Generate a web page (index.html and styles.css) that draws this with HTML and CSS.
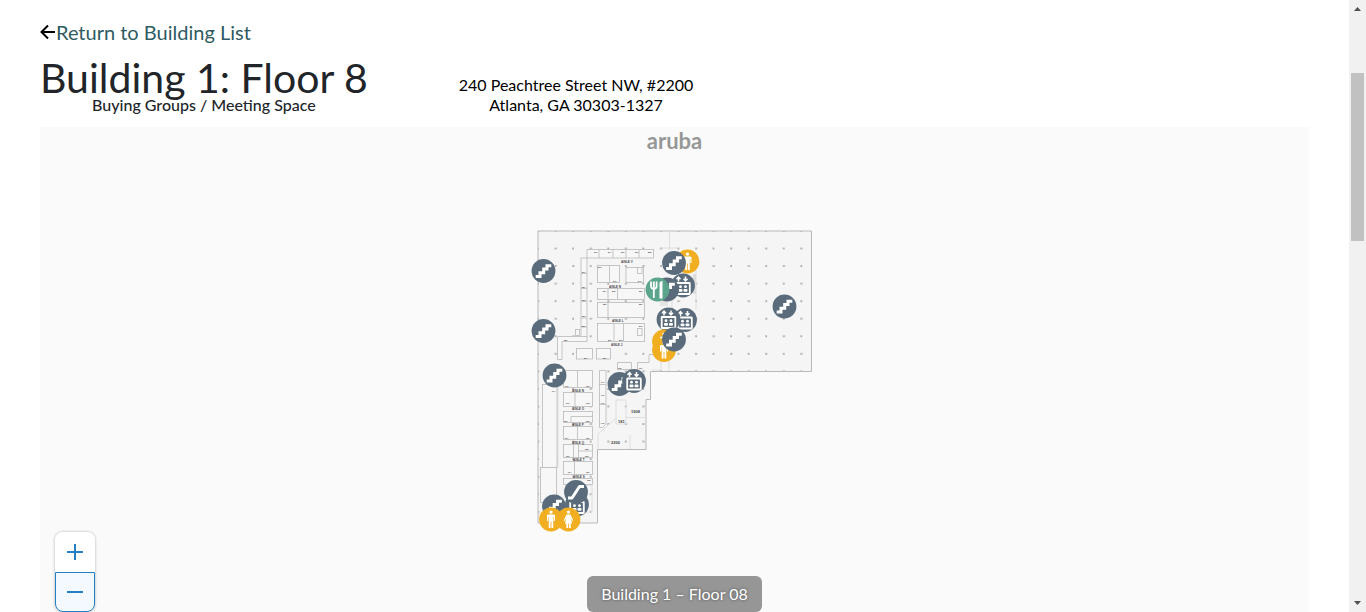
FILE: index.html
```html
<!DOCTYPE html>
<html lang="en">
<head>
<meta charset="utf-8">
<title>Building 1: Floor 8</title>
<link rel="stylesheet" href="styles.css">
</head>
<body>
<main class="page">
  <a class="back" href="#"><svg class="back-icon" viewBox="0 0 16 16" aria-hidden="true"><path d="M15 8H2M8 1.500L1.500 8L8 14.500"/></svg>Return to Building List</a>
  <header class="heading">
    <div class="heading-main">
      <h1 class="title">Building 1: Floor 8</h1>
      <p class="subtitle">Buying Groups / Meeting Space</p>
    </div>
    <address class="address">240 Peachtree Street NW, #2200<br>Atlanta, GA 30303-1327</address>
  </header>
  <section class="map" aria-label="Floor map">
    <div class="brand">aruba</div>
    <svg class="plan" viewBox="525 225 300 310" role="img" aria-label="Floor 8 plan">
      <defs>
        <pattern id="cols" x="536" y="229" width="35.100" height="35.100" patternUnits="userSpaceOnUse">
          <g fill="#c9c9c9"><rect x="1" y="1" width="2.500" height="2"/><rect x="18.500" y="18.500" width="2.500" height="2"/></g>
          <g fill="#858585"><rect x="18.900" y="1.200" width="1.500" height="1.500"/><rect x="1.300" y="18.800" width="1.500" height="1.500"/></g>
          <g fill="#a8a8a8"><rect x="1.500" y="1.300" width="1.300" height="1.300"/><rect x="19" y="19" width="1.300" height="1.300"/></g>
        </pattern>
        <g id="disc"><circle r="11.900" fill="#5a6c7b"/></g>
        <g id="stairs"><use href="#disc"/><path d="M-7.800 5.500H-3.500V1.700H.2V-2H3.500V-5.300H7.800" fill="none" stroke="#fff" stroke-width="3"/></g>
        <g id="escalator"><use href="#disc"/><path d="M-8 6H-4L3.500-5.500H8" fill="none" stroke="#fff" stroke-width="3" stroke-linejoin="round"/></g>
        <g id="lift"><use href="#disc"/>
          <path d="M-4.500-4V-8M-6.500-6.300L-4.500-8.500L-2.500-6.300M2.500-9V-5M.5-6.700L2.500-4.500L4.500-6.700" fill="none" stroke="#fff" stroke-width="1.500"/>
          <rect x="-6.800" y="-2.500" width="13.600" height="11" rx=".5" fill="#5a6c7b" stroke="#fff" stroke-width="1.800"/>
          <g fill="#fff"><circle cx="-2.500" cy="1.200" r="1.400"/><circle cx="2.500" cy="1.200" r="1.400"/><rect x="-4.500" y="3.400" width="4" height="2.800" rx="1"/><rect x=".5" y="3.400" width="4" height="2.800" rx="1"/></g></g>
        <g id="man"><circle r="11.900" fill="#f0ae20"/><g fill="#fff"><circle cy="-7.400" r="1.700"/><path d="M-2.800-5H2.800Q4-5 4-3.800V1.500H2.800V-2.500H2.300V8.500H.4V2H-.4V8.500H-2.300V-2.500H-2.800V1.500H-4V-3.800Q-4-5-2.800-5Z"/></g></g>
        <g id="woman"><circle r="11.900" fill="#f0ae20"/><g fill="#fff"><circle cy="-7.400" r="1.700"/><path d="M-2-5H2L4.800 1L3.700 1.500L2-2L3.600 4H2.200V8.500H.4V4H-.4V8.500H-2.200V4H-3.600L-2-2L-3.700 1.500L-4.800 1Z"/></g></g>
        <g id="food"><circle r="11.900" fill="#5aa58b"/><path d="M-6.500-8V-3.500Q-6.500-.5-3.700-.5T-.9-3.500V-8M-3.700-8V8.500" fill="none" stroke="#fff" stroke-width="1.800"/><path d="M2 9V-6Q2-8.500 5-8.500V9Z" fill="#fff"/></g>
      </defs>
      <path d="M538 231H811.500V371.500H650.500V399.500H646V449.500H597.500V523H538Z" fill="#f5f5f5"/>
      <path d="M538 231H811.500V371.500H650.500V399.500H646V449.500H597.500V523H538Z" fill="url(#cols)"/>
      <path d="M538 231H811.500V371.500H650.500V399.500H646V449.500H597.500V523H538Z" fill="none" stroke="#b9b9b9"/>
      <g fill="none" stroke="#dedede"><path d="M669.500 231V250M661 248H677M669 333V371M652 370H661V355M672 300V312M688 270H696V310M616 400H626V424H616ZM626 417.500H646M598 449V434L616 418M630 435V449M566 485H592V512H580M558 384V468"/></g>
      <g fill="#f7f7f7" stroke="#b9b9b9" stroke-width=".8">
        <rect x="587" y="249.500" width="66.500" height="8.500"/><rect x="581" y="258" width="6" height="79"/>
        <rect x="597.500" y="265.500" width="22" height="17"/><rect x="626" y="267.500" width="17.500" height="15"/><rect x="637.500" y="267.500" width="4.500" height="6"/>
        <rect x="597.500" y="288.500" width="47" height="11"/><rect x="597.500" y="302.500" width="47" height="15"/><rect x="597.500" y="323.500" width="47" height="18"/>
        <rect x="637.500" y="328.500" width="4.500" height="7"/><rect x="575.500" y="329.500" width="4" height="6"/>
        <path d="M557.500 336.500H587V341.500H562V359.500H557.500Z"/><rect x="576.500" y="348.500" width="16" height="10.500"/><rect x="596.500" y="348.500" width="14" height="10.500"/>
        <path d="M617.500 369.500V362.500H631.500V369.500ZM637.500 371V362.500H649V354.500H653" fill="none"/>
        <rect x="563.500" y="370.500" width="29" height="17"/><rect x="563.500" y="392.500" width="29" height="14"/><rect x="563.500" y="411.500" width="29" height="11"/>
        <rect x="563.500" y="426.500" width="29" height="13"/><rect x="563.500" y="444.500" width="29" height="13"/><rect x="563.500" y="461.500" width="29" height="13"/><rect x="563.500" y="478.500" width="29" height="6"/>
        <path d="M599.500 370.500H606V424L602.500 427.500H599.500Z"/><rect x="542.500" y="384.500" width="14.500" height="83"/><rect x="540.500" y="467.500" width="16" height="35"/>
        <path d="M599 249.500V258M613 249.500V258M626 249.500V258M639 249.500V258M581 273.500H587M581 288.500H587M581 301.500H587M581 318H587M581 327H587M609.500 265.500V282M608 288.500V299M617.500 288.500V299M608 302.500V317M614 323.500V341M623.500 323.500V341M577.500 370.500V387M575 392.500V406M571 422V416.500H592M577.500 426.500V439M573.500 444.500V457M578.500 444.500V457M578.500 451H592M574.500 461.500V474M599 384.500H606M599 404.500H606" fill="none"/>
      </g>
      <g class="aisle"><text x="621" y="263">AISLE V</text><text x="609" y="287.500">AISLE N</text><text x="612" y="322">AISLE L</text><text x="611" y="345.500">AISLE J</text><text x="572" y="391.500">AISLE N</text><text x="572" y="410">AISLE O</text><text x="572" y="426">AISLE P</text><text x="572" y="443.500">AISLE Q</text><text x="573" y="461">AISLE T</text><text x="573" y="478">AISLE S</text></g>
      <g class="unit"><text x="594" y="252.500">876</text><text x="608" y="252.500">874</text><text x="621" y="252.500">872</text><text x="635" y="252.500">870</text><text x="648" y="252.500">868</text><text x="598" y="268">836</text><text x="613" y="281.500">842</text><text x="638" y="281.500">841</text><text x="603" y="291.500">834</text><text x="612" y="291.500">832</text><text x="639" y="291.500">850</text><text x="603" y="305">822</text><text x="639" y="305">826</text><text x="608" y="340.500">810</text><text x="619" y="340.500">812</text><text x="639" y="327">816</text><text x="582" y="273">871</text><text x="582" y="288">867</text><text x="582" y="301">865</text><text x="582" y="317">863</text><text x="582" y="326.500">861</text><text x="564" y="340.500">859</text><text x="584" y="358.500">801</text><text x="603" y="358.500">803</text><text x="618" y="369">905</text><text x="639" y="369">907</text><text x="565" y="387">910</text><text x="586" y="387">912</text><text x="552" y="392">914</text><text x="566" y="404">916</text><text x="586" y="404">918</text><text x="564" y="422">920</text><text x="586" y="422">922</text><text x="565" y="439">924</text><text x="586" y="439">926</text><text x="585" y="450">928</text><text x="566" y="457">930</text><text x="585" y="457">932</text><text x="568" y="473">934</text><text x="586" y="473">936</text><text x="587" y="481">938</text><text x="601" y="383">941</text><text x="601" y="396">942</text><text x="601" y="404">943</text><text x="601" y="424">945</text></g>
      <g class="room"><text x="631" y="413">1908</text><text x="618" y="422.500">181</text><text x="611" y="443.500">2200</text></g>
      <rect x="693" y="274" width="3" height="20" fill="#dcdcdc"/><rect x="660" y="300" width="8" height="6" fill="#e5e5e5"/>
      <use href="#stairs" x="543.500" y="271"/><use href="#stairs" x="543.500" y="331"/><use href="#stairs" x="554.500" y="375.500"/><use href="#stairs" x="784.500" y="306.500"/>
      <use href="#man" x="687.500" y="261.500"/><use href="#lift" x="683" y="285.500"/><use href="#stairs" x="667" y="289.500"/><use href="#stairs" x="674" y="263"/><use href="#food" x="657.500" y="289.500"/>
      <use href="#lift" x="685" y="320"/><use href="#lift" x="668.500" y="319.500"/><use href="#man" x="664" y="341.500"/><use href="#man" x="664" y="350"/><use href="#stairs" x="674" y="339.500"/>
      <use href="#stairs" x="619.500" y="384"/><use href="#lift" x="634" y="381"/>
      <use href="#lift" x="577" y="504.500"/><use href="#escalator" x="576" y="492"/><use href="#stairs" x="554" y="506.500"/><use href="#woman" x="568.500" y="519.500"/><use href="#man" x="551" y="519.500"/>
    </svg>
    <div class="zoom">
      <button class="zoom-btn" type="button" aria-label="Zoom in"><svg viewBox="0 0 16 16"><path d="M0 8H16M8 0V16"/></svg></button>
      <button class="zoom-btn zoom-out" type="button" aria-label="Zoom out"><svg viewBox="0 0 16 16"><path d="M0 8H16"/></svg></button>
    </div>
    <div class="floor-label">Building 1 – Floor 08</div>
  </section>
</main>
<div class="scrollbar" aria-hidden="true">
  <svg class="arrow" viewBox="0 0 7 4"><path d="M0 4L3.500 0L7 4Z"/></svg>
  <div class="thumb"></div>
  <svg class="arrow arrow-down" viewBox="0 0 7 4"><path d="M0 0H7L3.500 4Z"/></svg>
</div>
</body>
</html>
```
FILE: styles.css
```css
* { box-sizing: border-box; }
body {
  margin: 0;
  height: 100vh;
  overflow: hidden;
  display: flex;
  background: #fff;
  color: #212529;
  font-family: Lato, "Open Sans", sans-serif;
}
.page {
  flex: 1;
  display: flex;
  flex-direction: column;
  padding: 19px 40px 0;
}
.back {
  display: flex;
  align-items: center;
  align-self: flex-start;
  font-size: 20px;
  line-height: 26px;
  color: #2f5b62;
  text-decoration: none;
}
.back-icon {
  width: 16px;
  height: 16px;
  fill: none;
  stroke: #000;
  stroke-width: 2;
}
.heading {
  display: flex;
  align-items: flex-end;
  gap: 91px;
  height: 82px;
  padding-bottom: 12px;
}
.title {
  margin: 0;
  font-size: 41px;
  font-weight: 400;
  line-height: 34px;
}
.subtitle {
  margin: 0;
  font-size: 16px;
  font-weight: 500;
  line-height: 20px;
  text-align: center;
}
.address {
  font-size: 16px;
  font-style: normal;
  line-height: 20px;
  text-align: center;
  color: #000;
}
.map {
  flex: 1;
  position: relative;
  display: flex;
  flex-direction: column;
  align-items: center;
  background: #fafafa;
}
.brand {
  height: 98px;
  padding-top: 2px;
  font-size: 22px;
  font-weight: 700;
  line-height: 24px;
  color: #979797;
}
.plan { width: 300px; flex: none; }
.aisle { font: 700 3px "Liberation Sans", sans-serif; fill: #444; }
.unit { font: 700 2px "Liberation Sans", sans-serif; fill: #444; }
.room { font: 700 4px "Liberation Sans", sans-serif; fill: #444; }
.zoom {
  position: absolute;
  left: 15px;
  bottom: 0;
  width: 40px;
  border-radius: 8px;
  box-shadow: 0 0 3px rgba(0, 0, 0, .3);
}
.zoom-btn {
  display: flex;
  align-items: center;
  justify-content: center;
  width: 40px;
  height: 40px;
  padding: 0;
  border: 0;
  border-radius: 8px 8px 0 0;
  background: #fff;
}
.zoom-out {
  border: 1px solid #2580c3;
  border-radius: 0 0 8px 8px;
  background: #f3f9fe;
}
.zoom-btn svg { width: 16px; height: 16px; stroke: #2580c3; stroke-width: 2; }
.floor-label {
  position: absolute;
  bottom: 0;
  padding: 0 14px;
  border-radius: 6px;
  background: #969696;
  color: #fff;
  font-size: 16px;
  line-height: 36px;
  text-shadow: 0 0 3px rgba(0, 0, 0, .5);
}
.scrollbar {
  display: flex;
  flex-direction: column;
  align-items: center;
  width: 17px;
  padding: 7px 2px;
  background: #f1f1f1;
}
.arrow { width: 7px; height: 4px; fill: #505050; }
.thumb { width: 13px; height: 168px; margin-top: 62px; background: #c1c1c1; }
.arrow-down { margin-top: auto; }
```
